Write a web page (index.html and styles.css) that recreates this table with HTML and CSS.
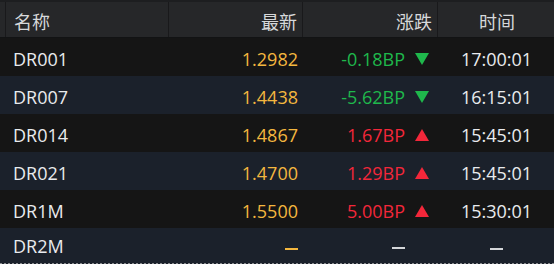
FILE: index.html
```html
<!DOCTYPE html>
<html lang="zh-CN">
<head>
<meta charset="utf-8">
<link rel="stylesheet" href="styles.css">
</head>
<body>
<div class="table">
  <div class="row head">
    <div class="cell name">名称</div>
    <div class="cell price">最新</div>
    <div class="cell change">涨跌</div>
    <div class="cell time">时间</div>
  </div>
  <div class="row dark">
    <div class="cell name">DR001</div>
    <div class="cell price">1.2982</div>
    <div class="cell change down"><span>-0.18BP</span><i class="tri"></i></div>
    <div class="cell time">17:00:01</div>
  </div>
  <div class="row navy">
    <div class="cell name">DR007</div>
    <div class="cell price">1.4438</div>
    <div class="cell change down"><span>-5.62BP</span><i class="tri"></i></div>
    <div class="cell time">16:15:01</div>
  </div>
  <div class="row dark">
    <div class="cell name">DR014</div>
    <div class="cell price">1.4867</div>
    <div class="cell change up"><span>1.67BP</span><i class="tri"></i></div>
    <div class="cell time">15:45:01</div>
  </div>
  <div class="row navy">
    <div class="cell name">DR021</div>
    <div class="cell price">1.4700</div>
    <div class="cell change up"><span>1.29BP</span><i class="tri"></i></div>
    <div class="cell time">15:45:01</div>
  </div>
  <div class="row dark">
    <div class="cell name">DR1M</div>
    <div class="cell price">1.5500</div>
    <div class="cell change up"><span>5.00BP</span><i class="tri"></i></div>
    <div class="cell time">15:30:01</div>
  </div>
  <div class="row navy last">
    <div class="cell name">DR2M</div>
    <div class="cell price"><span class="dash yellow"></span></div>
    <div class="cell change"><span class="dash"></span><i class="tri none"></i></div>
    <div class="cell time"><span class="dash"></span></div>
  </div>
  <div class="scroll"></div>
</div>
</body>
</html>
```

FILE: styles.css
```css
html, body {
  margin: 0;
  padding: 0;
  background: #1b212b;
}
body {
  width: 554px;
  height: 264px;
  overflow: hidden;
  font-family: "Open Sans", "Noto Sans CJK SC", sans-serif;
  font-size: 18px;
  color: #e9ebee;
}
.table {
  display: flex;
  flex-direction: column;
}
.row {
  display: grid;
  grid-template-columns: 168px 134px 135px 117px;
  height: 38px;
  align-items: center;
}
.head {
  height: 35px;
  border-top: 2px solid #1d1e20;
  border-bottom: 1px solid #121314;
  background: #262729;
  color: #d6d8da;
  padding-left: 5px;
  grid-template-columns: 163px 134px 135px 117px;
  align-items: stretch;
  font-family: "Noto Sans CJK SC", sans-serif;
}
.head .cell {
  border-left: 1px solid #19191b;
  display: flex;
  align-items: center;
  padding-top: 2px;
  color: #d6d8da;
}
.head .name { padding-left: 8px; }
.head .price { justify-content: flex-end; padding-right: 5px; }
.head .change { justify-content: flex-end; padding-right: 5px; }
.head .time { justify-content: center; }

.dark { background: #151515; }
.navy { background: #1b212b; }
.last { height: 33px; }

.cell { padding-top: 3px; }
.name { padding-left: 13px; }
.price { text-align: right; padding-right: 4px; color: #f4b73f; }
.change {
  display: flex;
  justify-content: flex-end;
  align-items: center;
  padding-right: 8px;
}
.time { text-align: center; padding-left: 2px; }
.down { color: #1fb84c; }
.up { color: #f3273a; }

.tri {
  display: inline-block;
  width: 0;
  height: 0;
  margin-left: 10px;
  border-left: 7px solid transparent;
  border-right: 7px solid transparent;
}
.down .tri { border-top: 12px solid #1fb84c; }
.up .tri { border-bottom: 12px solid #f3273a; }
.tri.none { border-top: 12px solid transparent; }

.dash {
  display: inline-block;
  width: 13px;
  height: 2px;
  background: #d4d6d9;
  vertical-align: middle;
  margin-top: 2px;
}
.dash.yellow { background: #f4b73f; }
.change .dash { margin-top: 4px; }

.scroll {
  height: 2px;
  border-bottom: 2px dotted #8a8c8f;
  background: #1b212b;
}
```
